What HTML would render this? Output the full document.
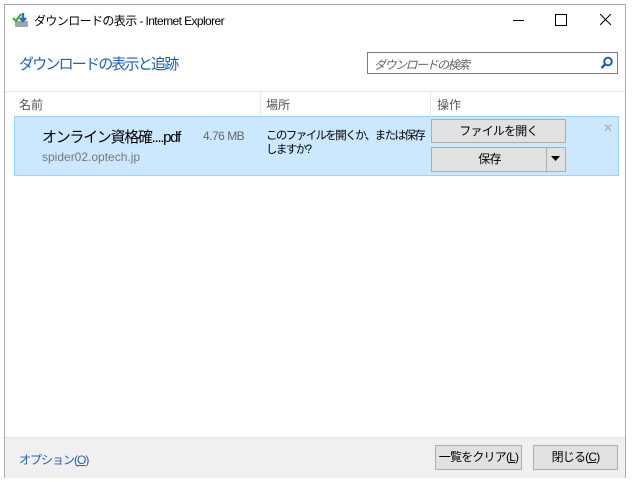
<html><head><style>
body{margin:0;width:634px;height:482px;background:#fff;position:relative;font-family:"Liberation Sans","Noto Sans CJK JP",sans-serif;overflow:hidden}
.a{position:absolute}
.win{left:4px;top:4px;width:622px;height:474px;border:1px solid #aaa;box-sizing:border-box;background:#fff}
.t{font-size:12px;color:#000;white-space:nowrap}
.btn{position:absolute;background:#e1e1e1;border:1px solid #adadad;box-sizing:border-box;font-size:12px;text-align:center;color:#000;white-space:nowrap;letter-spacing:-0.8px}
</style></head><body>
<div class="a win"></div>
<svg class="a" style="left:12px;top:11px" width="18" height="18"><rect x="3" y="10" width="13" height="6" fill="#9aa" rx="1"/><path d="M1 7l3 3 5-7" stroke="#3a3" stroke-width="2" fill="none"/><path d="M11 2v8M8 7l3 3 3-3" stroke="#2a6fd0" stroke-width="2.4" fill="none"/></svg>
<div class="a t" style="left:34px;top:12px;letter-spacing:-0.6px">ダウンロードの表示 - Internet Explorer</div>
<div class="a" style="left:513px;top:20px;width:11px;height:1px;background:#000"></div>
<div class="a" style="left:555px;top:14px;width:10px;height:10px;border:1px solid #000"></div>
<svg class="a" style="left:600px;top:14px" width="12" height="12"><path d="M0 0L11 11M11 0L0 11" stroke="#000"/></svg>
<div class="a" style="left:19px;top:53px;font-size:15px;letter-spacing:-1.8px;color:#1e5fb4">ダウンロードの表示と追跡</div>
<div class="a" style="left:367px;top:52px;width:251px;height:22px;border:1px solid #7a7a7a;box-sizing:border-box"></div>
<div class="a" style="left:374px;top:56px;font-size:12px;color:#666;font-style:italic;letter-spacing:-1.5px">ダウンロードの検索</div>
<svg class="a" style="left:600px;top:56px" width="14" height="14"><circle cx="8" cy="5.5" r="3.8" stroke="#1e5fb4" stroke-width="2" fill="none"/><path d="M5.5 8L1.5 12" stroke="#1e5fb4" stroke-width="2.5"/></svg>
<div class="a" style="left:5px;top:91px;width:620px;height:1px;background:#e3e8ef"></div>
<div class="a" style="left:260px;top:92px;width:1px;height:24px;background:#e8e8e8"></div>
<div class="a" style="left:430px;top:92px;width:1px;height:24px;background:#e8e8e8"></div>
<div class="a t" style="left:19px;top:96px;color:#555">名前</div>
<div class="a t" style="left:266px;top:96px;color:#555">場所</div>
<div class="a t" style="left:437px;top:96px;color:#555">操作</div>
<div class="a" style="left:14px;top:116px;width:605px;height:60px;background:#cce8ff;border:1px solid #99d1ff;box-sizing:border-box"></div>
<div class="a" style="left:42px;top:126px;font-size:15px;letter-spacing:-1.3px;color:#000;white-space:nowrap">オンライン資格確....pdf</div>
<div class="a t" style="left:203px;top:129px;color:#666;letter-spacing:-0.5px">4.76 MB</div>
<div class="a t" style="left:42px;top:150px;color:#777">spider02.optech.jp</div>
<div class="a t" style="left:266px;top:129px;line-height:14px;font-size:11.5px;letter-spacing:-1.6px">このファイルを開くか、または保存<br>しますか?</div>
<div class="btn" style="left:431px;top:119px;width:135px;height:24px;line-height:22px">ファイルを開く</div>
<div class="btn" style="left:431px;top:147px;width:135px;height:25px;line-height:23px;text-align:left"><span style="display:inline-block;width:115px;text-align:center">保存</span></div>
<div class="a" style="left:546px;top:148px;width:1px;height:23px;background:#adadad"></div>
<svg class="a" style="left:551px;top:156px" width="10" height="6"><path d="M0 0h9L4.5 5z" fill="#000"/></svg>
<div class="a" style="left:603px;top:121px;font-size:12px;color:#aaa">✕</div>
<div class="a" style="left:5px;top:437px;width:620px;height:40px;background:#f0f0f0;border-top:1px solid #e6e6e6"></div>
<div class="a t" style="left:19px;top:451px;color:#1e5fb4;letter-spacing:-1px">オプション(<u>O</u>)</div>
<div class="btn" style="left:435px;top:445px;width:87px;height:25px;line-height:23px">一覧をクリア(<u>L</u>)</div>
<div class="btn" style="left:533px;top:445px;width:85px;height:25px;line-height:23px">閉じる(<u>C</u>)</div>
</body></html>
